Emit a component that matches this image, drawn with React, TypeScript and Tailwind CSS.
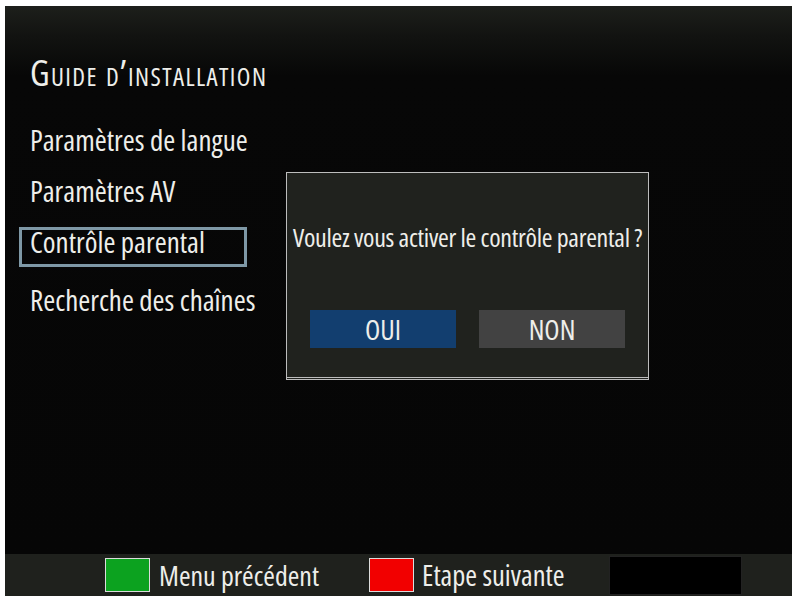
import React from "react";

const menu = [
  { label: "Paramètres de langue", selected: false, mt: "mt-[32px]" },
  { label: "Paramètres AV", selected: false, mt: "mt-[11px]" },
  { label: "Contrôle parental", selected: true, mt: "mt-[11px]" },
  { label: "Recherche des chaînes", selected: false, mt: "mt-[18px]" },
];

export default function App() {
  return (
    <div className="w-[792px] h-[596px] bg-white pt-[6px] pl-[5px] overflow-hidden font-['Open_Sans',sans-serif] [font-stretch:condensed] text-[#eeeeea]">
      <div className="relative flex flex-col w-[787px] h-[590px]">
        {/* main area */}
        <div className="h-[548px] bg-[linear-gradient(to_bottom,#1d1f1b_0px,#121311_30px,#070707_70px,#060606_100%)] pl-[25px] pt-[47px]">
          <h1 className="h-[40px] text-[36px] leading-[40px] tracking-[1.4px] [font-variant:small-caps] whitespace-nowrap">
            Guide d’installation
          </h1>
          <div className="flex flex-col w-[228px] -ml-[11px]">
            {menu.map((m) => (
              <div
                key={m.label}
                className={
                  (m.selected
                    ? "border-[#7e98a6] "
                    : "border-transparent ") +
                  m.mt +
                  " h-[40px] border-[3px] pl-[8px] text-[29px] leading-[24px] whitespace-nowrap"
                }
              >
                {m.label}
              </div>
            ))}
          </div>
        </div>

        {/* footer */}
        <div className="h-[42px] bg-[#1f211d] flex items-center">
          <div className="ml-[100px] w-[45px] h-[34px] bg-[#0ca21f] border border-[#dcdcdc]" />
          <span className="ml-[9px] text-[28px] leading-[34px] whitespace-nowrap">Menu précédent</span>
          <div className="ml-[50px] w-[45px] h-[34px] bg-[#f20000] border border-[#dcdcdc]" />
          <span className="ml-[8px] text-[28.5px] leading-[34px] whitespace-nowrap">Etape suivante</span>
          <div className="ml-[44px] w-[133px] h-[39px] bg-black border border-[#222]" />
        </div>

        {/* dialog */}
        <div className="absolute left-[281px] top-[166px] w-[363px] h-[208px] bg-[#20221e] border border-[#bdbdbd] border-b-[3px] border-b-[#bdbdbd] [border-bottom-style:double] flex flex-col items-center">
          <p className="mt-[47px] text-[26px] leading-[34px] tracking-[-0.3px] whitespace-nowrap">
            Voulez vous activer le contrôle parental ?
          </p>
          <div className="mt-[56px] flex gap-[23px]">
            <div className="w-[146px] h-[38px] bg-[#123e6f] flex items-center justify-center text-[28px] leading-[30px]">
              OUI
            </div>
            <div className="w-[146px] h-[38px] bg-[#424242] flex items-center justify-center text-[28px] leading-[30px]">
              NON
            </div>
          </div>
        </div>
      </div>
    </div>
  );
}
